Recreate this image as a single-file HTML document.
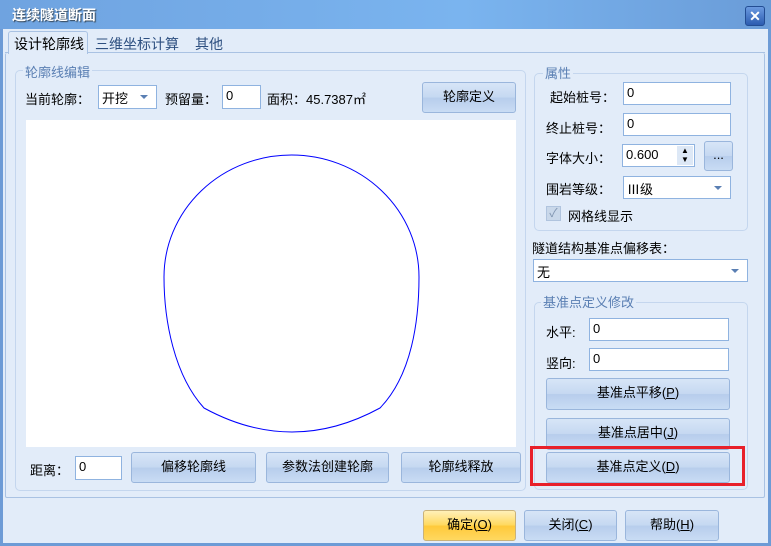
<!DOCTYPE html><html><head><meta charset="utf-8"><style>
*{box-sizing:border-box;margin:0;padding:0}
body{width:771px;height:546px;overflow:hidden;background:#e2ecf9;font-family:"Liberation Sans","Noto Sans CJK SC",sans-serif;font-size:13px;color:#000;position:relative}
.a{position:absolute}
.win{left:0;top:0;width:771px;height:546px;border:3px solid #6d9bd6;border-top:none}
.title{left:0;top:0;width:771px;height:29px;background:linear-gradient(to right,#6fa3e0,#7ab4ef 60%,#6a9cd8);color:#fff;font-weight:bold;font-size:14px;padding:5px 0 0 12px;text-shadow:1px 1px 1px #345}
.close{left:745px;top:6px;width:20px;height:20px;background:linear-gradient(#6b9ae0,#2c5cb0);border:1px solid #234d93;border-radius:3px;color:#fff;font-weight:bold;text-align:center;line-height:18px;font-size:14px}
.panel{left:5px;top:52px;width:760px;height:446px;border:1px solid #a9c2e3;border-radius:2px}
.grp{border:1px solid #c4d6ee;border-radius:5px}
.gl{background:#e2ecf9;color:#5a7fb3;padding:0 2px;font-size:13px}
.inp{background:#fff;border:1px solid #8fb3e0;height:24px;padding:2px 3px;font-size:13px}
.btn{border:1px solid #9ab6dc;border-radius:3px;background:linear-gradient(#d7e5f7,#c5d8f1 50%,#b7cdec 51%,#c9dcf4);text-align:center;font-size:13px;line-height:28px}
.arr{position:absolute;right:8px;top:9px;width:0;height:0;border-left:4px solid transparent;border-right:4px solid transparent;border-top:4px solid #5a7fb3}
</style></head><body>
<div class="a win"></div>
<div class="a title">连续隧道断面</div>
<div class="a close">✕</div>
<div class="a" style="left:5px;top:52px;width:760px;height:1px;background:#a9c2e3"></div>
<div class="a" style="left:8px;top:31px;width:80px;height:23px;background:#e2ecf9;border:1px solid #a9c2e3;border-bottom:none;border-radius:3px 3px 0 0;padding:2px 0 0 5px;font-size:14px">设计轮廓线</div>
<div class="a" style="left:95px;top:34px;color:#2d4f80;font-size:14px">三维坐标计算</div>
<div class="a" style="left:195px;top:34px;color:#2d4f80;font-size:14px">其他</div>
<div class="a panel" style="border-top:none;top:53px;height:445px"></div>
<div class="a grp" style="left:15px;top:70px;width:511px;height:421px"></div>
<div class="a gl" style="left:23px;top:62px">轮廓线编辑</div>
<div class="a" style="left:25px;top:89px">当前轮廓：</div>
<div class="a inp" style="left:98px;top:85px;width:59px">开挖<span class="arr"></span></div>
<div class="a" style="left:165px;top:89px">预留量：</div>
<div class="a inp" style="left:222px;top:85px;width:39px">0</div>
<div class="a" style="left:267px;top:89px">面积：45.7387㎡</div>
<div class="a btn" style="left:422px;top:82px;width:94px;height:31px">轮廓定义</div>
<div class="a" style="left:26px;top:120px;width:490px;height:327px;background:#fff"></div>
<svg class="a" style="left:0;top:0" width="771" height="546"><path d="M164,277 A127.5 122 0 0 1 419,277 C419,320 412,375 380,408 Q292,456 204,408 C174,375 164,320 164,277 Z" fill="none" stroke="#0000ff" stroke-width="1"/></svg>
<div class="a" style="left:30px;top:460px">距离：</div>
<div class="a inp" style="left:75px;top:456px;width:47px">0</div>
<div class="a btn" style="left:131px;top:452px;width:125px;height:31px">偏移轮廓线</div>
<div class="a btn" style="left:266px;top:452px;width:123px;height:31px">参数法创建轮廓</div>
<div class="a btn" style="left:401px;top:452px;width:120px;height:31px">轮廓线释放</div>
<div class="a grp" style="left:534px;top:73px;width:214px;height:158px"></div>
<div class="a gl" style="left:543px;top:63px">属性</div>
<div class="a" style="left:550px;top:87px">起始桩号：</div>
<div class="a inp" style="left:623px;top:82px;width:108px;height:23px">0</div>
<div class="a" style="left:546px;top:118px">终止桩号：</div>
<div class="a inp" style="left:623px;top:113px;width:108px;height:23px">0</div>
<div class="a" style="left:546px;top:148px">字体大小：</div>
<div class="a inp" style="left:622px;top:144px;width:73px;height:23px">0.600</div>
<div class="a" style="left:677px;top:146px;width:16px;height:19px;font-size:8px;line-height:9px;text-align:center;background:#dde8f6">▲<br>▼</div>
<div class="a btn" style="left:704px;top:141px;width:29px;height:30px;line-height:26px">...</div>
<div class="a" style="left:546px;top:179px">围岩等级：</div>
<div class="a inp" style="left:623px;top:176px;width:108px;height:23px">Ⅲ级<span class="arr"></span></div>
<div class="a" style="left:546px;top:206px;width:15px;height:15px;background:#c9d8ea;border:1px solid #b0c4de;color:#7f94b0;font-size:12px;line-height:13px;text-align:center">✓</div>
<div class="a" style="left:568px;top:206px">网格线显示</div>
<div class="a" style="left:532px;top:238px">隧道结构基准点偏移表：</div>
<div class="a inp" style="left:533px;top:259px;width:215px;height:23px">无<span class="arr"></span></div>
<div class="a grp" style="left:534px;top:302px;width:214px;height:188px"></div>
<div class="a gl" style="left:541px;top:292px">基准点定义修改</div>
<div class="a" style="left:546px;top:322px">水平:</div>
<div class="a inp" style="left:589px;top:318px;width:140px;height:23px">0</div>
<div class="a" style="left:546px;top:353px">竖向:</div>
<div class="a inp" style="left:589px;top:348px;width:140px;height:23px">0</div>
<div class="a btn" style="left:546px;top:378px;width:184px;height:32px">基准点平移(<u>P</u>)</div>
<div class="a btn" style="left:546px;top:418px;width:184px;height:32px">基准点居中(<u>J</u>)</div>
<div class="a btn" style="left:546px;top:452px;width:184px;height:31px">基准点定义(<u>D</u>)</div>
<div class="a" style="left:530px;top:446px;width:215px;height:40px;border:3px solid #e8202a"></div>
<div class="a btn" style="left:423px;top:510px;width:93px;height:31px;background:linear-gradient(#fff0b8,#ffd85c 50%,#ffc93a 51%,#ffd860);border-color:#c9b27a">确定(<u>O</u>)</div>
<div class="a btn" style="left:524px;top:510px;width:93px;height:31px">关闭(<u>C</u>)</div>
<div class="a btn" style="left:625px;top:510px;width:94px;height:31px">帮助(<u>H</u>)</div>
</body></html>
